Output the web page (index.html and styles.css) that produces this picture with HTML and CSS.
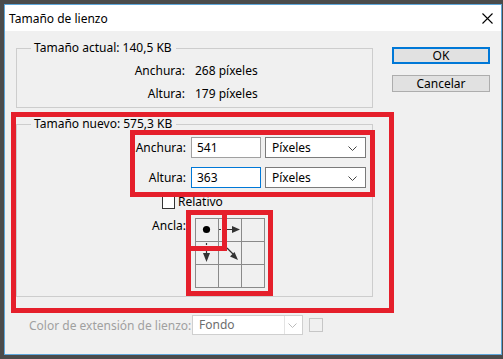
FILE: index.html
```html
<!DOCTYPE html>
<html lang="es">
<head>
    <meta charset="UTF-8">
    <title>Tamaño de lienzo</title>
    <link rel="stylesheet" href="styles.css">
</head>
<body>
    <div class="dialog">
        <div class="titlebar">
            <span class="title">Tamaño de lienzo</span>
            <svg class="close" width="11" height="11" viewBox="0 0 11 11">
                <path d="M0.5 0.5 L10.5 10.5 M10.5 0.5 L0.5 10.5" stroke="#000" stroke-width="1.1" fill="none"/>
            </svg>
        </div>

        <div class="content">
            <div class="main">
                <!-- tamaño actual -->
                <fieldset class="group group-current">
                    <legend>Tamaño actual: 140,5 KB</legend>
                    <div class="info-row"><span class="lbl">Anchura:</span><span>268 píxeles</span></div>
                    <div class="info-row"><span class="lbl">Altura:</span><span>179 píxeles</span></div>
                </fieldset>

                <!-- tamaño nuevo -->
                <fieldset class="group group-new">
                    <legend>Tamaño nuevo: 575,3 KB</legend>
                    <div class="field-row">
                        <span class="lbl">Anchura:</span>
                        <div class="input">541</div>
                        <div class="select">Píxeles
                            <svg class="chev" width="9" height="5" viewBox="0 0 9 5"><path d="M0.5 0.5 L4.5 4.5 L8.5 0.5" stroke="#444" fill="none"/></svg>
                        </div>
                    </div>
                    <div class="field-row">
                        <span class="lbl">Altura:</span>
                        <div class="input focused">363</div>
                        <div class="select">Píxeles
                            <svg class="chev" width="9" height="5" viewBox="0 0 9 5"><path d="M0.5 0.5 L4.5 4.5 L8.5 0.5" stroke="#444" fill="none"/></svg>
                        </div>
                    </div>
                    <div class="check-row"><span class="checkbox"></span>Relativo</div>
                    <div class="anchor-row">
                        <span class="lbl">Ancla:</span>
                        <svg class="anchor" width="71" height="71" viewBox="0 0 71 71">
                            <g stroke="#8a8a8a" stroke-width="1" fill="none">
                                <rect x="0.5" y="0.5" width="69" height="69"/>
                                <path d="M23.5 0.5 V69.5 M46.5 0.5 V69.5 M0.5 23.5 H69.5 M0.5 46.5 H69.5"/>
                            </g>
                            <circle cx="11.5" cy="11.5" r="3.6" fill="#000"/>
                            <g stroke="#333" stroke-width="1.2" fill="#333">
                                <path d="M24 11.5 H26 M28 11.5 H37" fill="none"/>
                                <path d="M37 8 L45 11.5 L37 15 Z" stroke="none"/>
                                <path d="M11.5 25 V27 M11.5 29 V36" fill="none"/>
                                <path d="M8 35 L11.5 44 L15 35 Z" stroke="none"/>
                                <path d="M32 30 L38 36" fill="none"/>
                                <path d="M35 38.5 L43 42 L39.5 34 Z" stroke="none"/>
                            </g>
                        </svg>
                    </div>
                </fieldset>

                <div class="ext-row">
                    <span class="ext-label">Color de extensión de lienzo:</span>
                    <div class="select select-disabled">Fondo
                        <span class="sep"></span>
                        <svg class="chev" width="9" height="5" viewBox="0 0 9 5"><path d="M0.5 0.5 L4.5 4.5 L8.5 0.5" stroke="#bbb" fill="none"/></svg>
                    </div>
                    <span class="swatch"></span>
                </div>
            </div>

            <div class="buttons">
                <button class="btn btn-default">OK</button>
                <button class="btn">Cancelar</button>
            </div>
        </div>

        <!-- marcas rojas -->
        <div class="mark mark-new"></div>
        <div class="mark mark-fields"></div>
        <div class="mark mark-anchor"></div>
        <div class="mark mark-corner"></div>
    </div>
</body>
</html>
```

FILE: styles.css
```css
* {
    box-sizing: border-box;
}

body {
    margin: 0;
    background-color: #4b4b4b;
    font-family: 'Noto Sans', 'Liberation Sans', sans-serif;
    font-size: 12px;
    color: #000;
}

.dialog {
    position: relative;
    margin: 4px 0 0 4px;
    width: 498px;
    height: 351px;
    border: 1px solid #5ea6d9;
    background-color: #f0f0f0;
}

/* barra de título */
.titlebar {
    height: 26px;
    background-color: #fff;
    display: flex;
    align-items: center;
    justify-content: space-between;
    padding: 0 8px 0 4px;
}

.content {
    display: flex;
    padding-left: 11px;
}

.main {
    width: 357px;
}

/* grupos */
.group {
    margin: 0;
    padding: 0;
    border: 1px solid #cdcdcd;
    min-width: 0;
}

.group legend {
    margin-left: 14px;
    padding: 0 4px 0 3px;
    line-height: 16px;
}

.group-current {
    margin-top: 9px;
    padding: 3px 0 2px;
}

.group-new {
    margin-top: 8px;
    padding: 5px 0 7px;
}

.lbl {
    text-align: right;
}

.info-row {
    display: flex;
    height: 23px;
    line-height: 23px;
}

.info-row .lbl {
    width: 168px;
    margin-right: 10px;
}

.field-row {
    display: flex;
    align-items: center;
    height: 21px;
    margin-bottom: 9px;
}

.field-row .lbl {
    width: 169px;
    margin-right: 5px;
}

.input {
    width: 70px;
    height: 21px;
    border: 1px solid #a0a0a0;
    background: #fff;
    padding-left: 5px;
    line-height: 19px;
    margin-right: 4px;
}

.input.focused {
    border-color: #0078d7;
}

.select {
    position: relative;
    width: 101px;
    height: 21px;
    border: 1px solid #7a7a7a;
    background: #fff;
    padding-left: 6px;
    line-height: 19px;
}

.chev {
    position: absolute;
    right: 8px;
    top: 8px;
}

.check-row {
    display: flex;
    align-items: center;
    height: 14px;
    line-height: 14px;
    margin-top: -2px;
    padding-left: 145px;
}

.checkbox {
    width: 13px;
    height: 13px;
    border: 1px solid #333;
    background: #fff;
    margin-right: 3px;
}

.anchor-row {
    display: flex;
    align-items: flex-start;
    margin-top: 9px;
}

.anchor-row .lbl {
    width: 169px;
    line-height: 16px;
    margin-top: 0;
    margin-right: 9px;
}

.anchor {
    display: block;
}

/* color de extensión */
.ext-row {
    display: flex;
    align-items: center;
    margin-top: 18px;
    padding-left: 13px;
    color: #a0a0a0;
}

.ext-label {
    width: 163px;
}

.select-disabled {
    width: 111px;
    height: 20px;
    border-color: #cfcfcf;
    color: #6d6d6d;
    line-height: 18px;
    margin-right: 6px;
}

.select-disabled .sep {
    position: absolute;
    right: 17px;
    top: 0;
    bottom: 0;
    border-left: 1px solid #e3e3e3;
}

.select-disabled .chev {
    right: 5px;
    top: 7px;
}

.swatch {
    width: 14px;
    height: 14px;
    border: 1px solid #c6c6c6;
}

/* botones */
.buttons {
    display: flex;
    flex-direction: column;
    gap: 11px;
    margin-left: 19px;
    padding-top: 16px;
}

.btn {
    width: 98px;
    height: 17px;
    padding: 0;
    border: 1px solid #adadad;
    background-color: #e1e1e1;
    font-family: inherit;
    font-size: 12px;
    line-height: 14px;
    color: #000;
}

.btn-default {
    border: 2px solid #0078d7;
}

/* marcas rojas */
.mark {
    position: absolute;
    border: 5px solid #e51f2b;
}

.mark-new {
    left: 6px;
    top: 107px;
    width: 383px;
    height: 201px;
}

.mark-fields {
    left: 125px;
    top: 125px;
    width: 245px;
    height: 67px;
}

.mark-anchor {
    left: 181px;
    top: 205px;
    width: 87px;
    height: 86px;
}

.mark-corner {
    left: 181px;
    top: 205px;
    width: 41px;
    height: 41px;
}
```
